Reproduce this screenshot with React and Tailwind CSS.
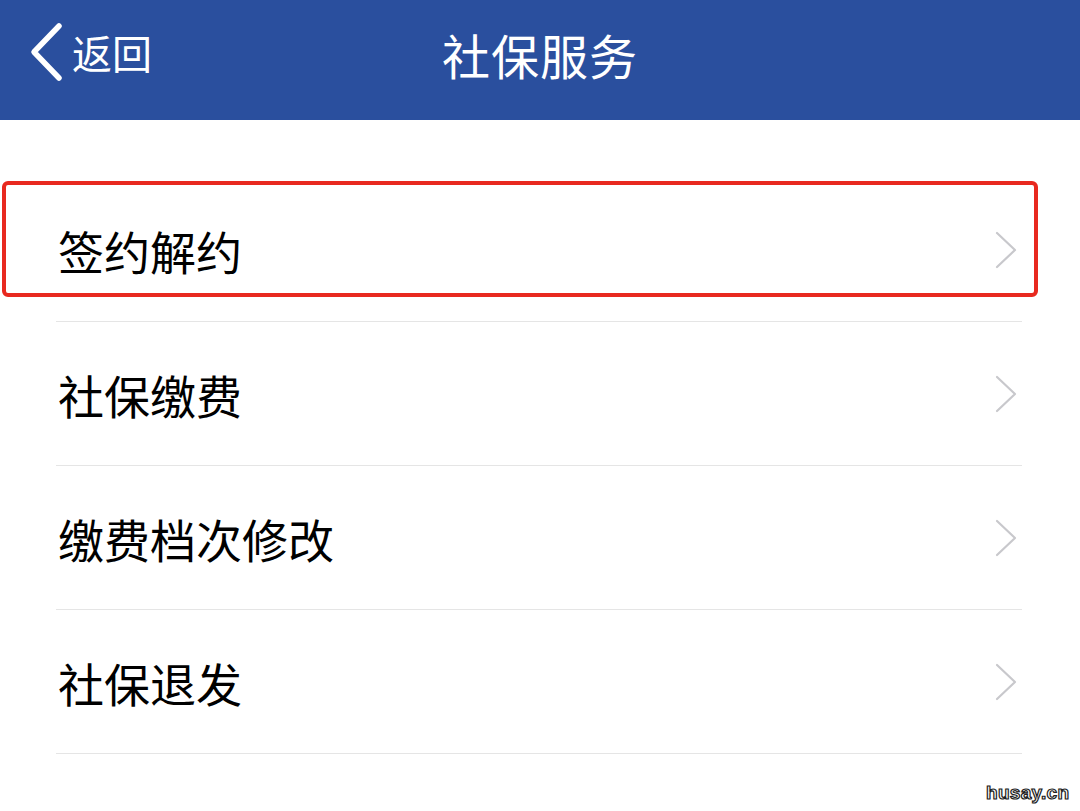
import { } from 'react';

const items = ['签约解约', '社保缴费', '缴费档次修改', '社保退发'];

function Chevron() {
  return (
    <svg width="24" height="40" viewBox="0 0 24 40" fill="none">
      <path d="M3 3 L21 20 L3 37" stroke="#c8c8cc" strokeWidth="2.2" strokeLinecap="round" strokeLinejoin="round" />
    </svg>
  );
}

export default function App() {
  return (
    <div
      className="relative w-[1080px] h-[811px] overflow-hidden bg-white"
      style={{ fontFamily: '"Noto Sans CJK SC", "Noto Sans", sans-serif' }}
    >
      {/* Header */}
      <div className="relative h-[120px] bg-[#2a4f9e] flex items-center justify-center text-white">
        <div className="absolute left-[28px] top-0 h-[104px] flex items-center gap-[8px]">
          <svg width="36" height="60" viewBox="0 0 36 60" fill="none">
            <path d="M31 4 L6 30 L31 56" stroke="white" strokeWidth="5.5" strokeLinecap="round" strokeLinejoin="round" />
          </svg>
          <span className="text-[40px] leading-none">返回</span>
        </div>
        <span className="text-[48px] leading-none -mt-[12px] tracking-[1px]">社保服务</span>
      </div>

      {/* List */}
      <div className="pt-[58px] pl-[56px] pr-[58px]">
        {items.map((t) => (
          <div key={t} className="h-[144px] border-b border-[#e5e5e5] flex items-center justify-between">
            <span className="text-[46px] leading-none text-black pl-[2px]">{t}</span>
            <div className="pr-[4px]">
              <Chevron />
            </div>
          </div>
        ))}
      </div>

      {/* Annotation box */}
      <div className="absolute left-[2px] top-[181px] w-[1036px] h-[116px] border-[4px] border-[#e8291f] rounded-[6px]" />

      {/* Watermark */}
      <div
        className="absolute left-[986px] top-[783px] text-[19px] font-bold text-white leading-none tracking-[0.3px] [-webkit-text-stroke:1.2px_#222]"
        style={{ fontFamily: '"Liberation Sans", sans-serif' }}
      >
        husay.cn
      </div>
    </div>
  );
}
